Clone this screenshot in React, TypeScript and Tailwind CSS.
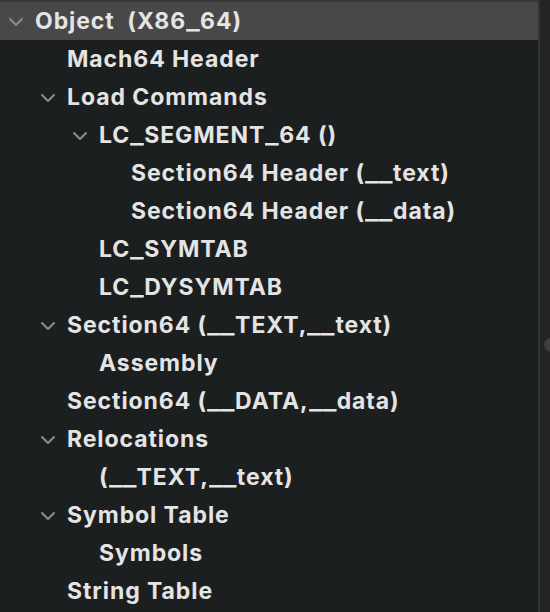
const rows: { label: string; level: number; open?: boolean }[] = [
  { label: "Object  (X86_64)", level: 0, open: true },
  { label: "Mach64 Header", level: 1 },
  { label: "Load Commands", level: 1, open: true },
  { label: "LC_SEGMENT_64 ()", level: 2, open: true },
  { label: "Section64 Header (__text)", level: 3 },
  { label: "Section64 Header (__data)", level: 3 },
  { label: "LC_SYMTAB", level: 2 },
  { label: "LC_DYSYMTAB", level: 2 },
  { label: "Section64 (__TEXT,__text)", level: 1, open: true },
  { label: "Assembly", level: 2 },
  { label: "Section64 (__DATA,__data)", level: 1 },
  { label: "Relocations", level: 1, open: true },
  { label: "(__TEXT,__text)", level: 2 },
  { label: "Symbol Table", level: 1, open: true },
  { label: "Symbols", level: 2 },
  { label: "String Table", level: 1 },
]

const indent = ["pl-[8px]", "pl-[40px]", "pl-[72px]", "pl-[104px]"]

const Chevron = () => (
  <svg width="16" height="10" viewBox="0 0 16 10" className="mt-[2px]">
    <path d="M2 2 L8 8 L14 2" fill="none" stroke="#8c8c8c" strokeWidth="2" strokeLinecap="round" strokeLinejoin="round" />
  </svg>
)

// underscores are noticeably wider in the original font, stretch them
const Label = ({ text }: { text: string }) => (
  <>
    {text.split(/(_+)/).map((part, i) =>
      part.startsWith("_") ? (
        <span key={i} className={`inline-block ${part.length > 1 ? "w-[28px]" : "w-[14px]"}`}>
          <span className="inline-block origin-left scale-x-[1.25] tracking-[0px]">{part}</span>
        </span>
      ) : (
        <span key={i}>{part}</span>
      )
    )}
  </>
)

export default function App() {
  return (
    <div className="flex h-[612px] w-[550px] overflow-hidden bg-[#1c1f20]" style={{ fontFamily: "Inter, 'Noto Sans', sans-serif" }}>
      <div className="relative flex-1 border-r-2 border-[#343434]">
        <div className="h-[2px] bg-[#383838]" />
        {rows.map((r, i) => (
          <div
            key={i}
            className={`flex h-[38px] items-center ${indent[r.level]} ${i === 0 ? "bg-[#484848]" : ""}`}
          >
            <div className="flex w-[27px] shrink-0 items-center">{r.open ? <Chevron /> : null}</div>
            <span className="whitespace-pre text-[23px] font-bold tracking-[0.04em] text-[#e4e4e4]">
              <Label text={r.label} />
            </span>
          </div>
        ))}
      </div>
      <div className="relative w-[10px] bg-[#242424]">
        <div className="absolute left-[4px] top-[338px] h-[14px] w-[14px] rounded-full bg-[#3e3e3e]" />
      </div>
    </div>
  )
}
